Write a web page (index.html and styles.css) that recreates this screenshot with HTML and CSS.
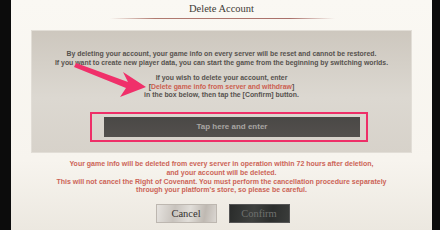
FILE: index.html
```html
<!DOCTYPE html>
<html lang="en">
<head>
    <meta charset="UTF-8">
    <meta name="viewport" content="width=device-width, initial-scale=1.0">
    <title>Delete Account</title>
    <link rel="stylesheet" href="styles.css">
</head>
<body>
    <div class="dialog">
        <h1 class="dialog-title">Delete Account</h1>
        <div class="title-rule"></div>

        <div class="info-box">
            <p class="info-text">
                By deleting your account, your game info on every server will be reset and cannot be restored.<br>
                If you want to create new player data, you can start the game from the beginning by switching worlds.
            </p>
            <p class="info-text">
                If you wish to delete your account, enter<br>
                [<span class="phrase">Delete game info from server and withdraw</span>]<br>
                in the box below, then tap the [Confirm] button.
            </p>

            <div class="highlight">
                <div class="input-box">Tap here and enter</div>
            </div>

            <!-- annotation arrow -->
            <svg class="arrow" width="80" height="40" viewBox="0 0 80 40">
                <path d="M2 2 L54 21 L49 11 L72 26 L46 36 L52 27 L0 6 Z" fill="#f0306a"/>
            </svg>
        </div>

        <div class="warning">
            Your game info will be deleted from every server in operation within 72 hours after deletion,<br>
            and your account will be deleted.<br>
            This will not cancel the Right of Covenant. You must perform the cancellation procedure separately<br>
            through your platform's store, so please be careful.
        </div>

        <div class="btn-row">
            <button class="btn btn-cancel">Cancel</button>
            <button class="btn btn-confirm">Confirm</button>
        </div>
    </div>
</body>
</html>
```

FILE: styles.css
```css
body {
    margin: 0;
    padding: 0 8px 0 11px;
    background-color: #0c0c0c;
    font-family: "Liberation Sans", Arial, sans-serif;
}
.dialog {
    height: 230px;
    background: linear-gradient(to bottom, #faf8f3 0%, #f7f4ee 70%, #ece8e0 100%);
    overflow: hidden;
}
.dialog-title {
    margin: 0;
    height: 18px;
    line-height: 17px;
    text-align: center;
    font-family: "Liberation Serif", "Times New Roman", serif;
    font-weight: normal;
    font-size: 10.5px;
    color: #3f3a36;
}
.title-rule {
    width: 225px;
    height: 1px;
    margin-left: 99px;
    background: linear-gradient(to right, rgba(170,110,100,0), #b07a70 20%, #a9706a 80%, rgba(170,110,100,0));
}
.info-box {
    position: relative;
    margin: 11px 20px 0 20px;
    height: 123px;
    padding-top: 20px;
    box-sizing: border-box;
    background: linear-gradient(to bottom, #cdc7be 0%, #dcd8d1 55%, #d7d2ca 100%);
    box-shadow: inset 0 0 0 1px #e2ded7;
}
.info-text {
    margin: 0 0 7px 0;
    text-align: center;
    font-size: 6.9px;
    font-weight: bold;
    line-height: 8.6px;
    color: #56524e;
}
.phrase {
    color: #cc5f50;
}
.highlight {
    margin: 12px 0 0 59px;
    width: 278px;
    height: 30px;
    box-sizing: border-box;
    border: 2px solid #ee2f68;
    padding: 3px 6px 3px 12px;
}
.input-box {
    height: 20px;
    line-height: 20px;
    text-align: center;
    font-size: 8px;
    font-weight: bold;
    color: #a8a5a2;
    background: linear-gradient(to bottom, #4a4846, #53504d);
}
.arrow {
    position: absolute;
    left: 43px;
    top: 31px;
}
.warning {
    margin-top: 7px;
    text-align: center;
    font-size: 7px;
    font-weight: bold;
    line-height: 8.8px;
    color: #cc6457;
}
.btn-row {
    display: flex;
    justify-content: center;
    gap: 12px;
    margin-top: 9px;
    padding-left: 2px;
}
.btn {
    width: 61px;
    height: 19px;
    padding: 0;
    border: 1px solid #bdb7b0;
    font-family: "Liberation Serif", "Times New Roman", serif;
    font-size: 10.5px;
    line-height: 17px;
}
.btn-cancel {
    background: linear-gradient(100deg, #e6e3df, #c8c3bd 30%, #e1ded9 55%, #bfb9b2 80%, #dad6d1);
    color: #33312f;
}
.btn-confirm {
    background: linear-gradient(100deg, #2a2c2b, #3e403e 40%, #2c2e2d 70%, #3a3c3a);
    border-color: #555;
    color: #6f716f;
}
```
